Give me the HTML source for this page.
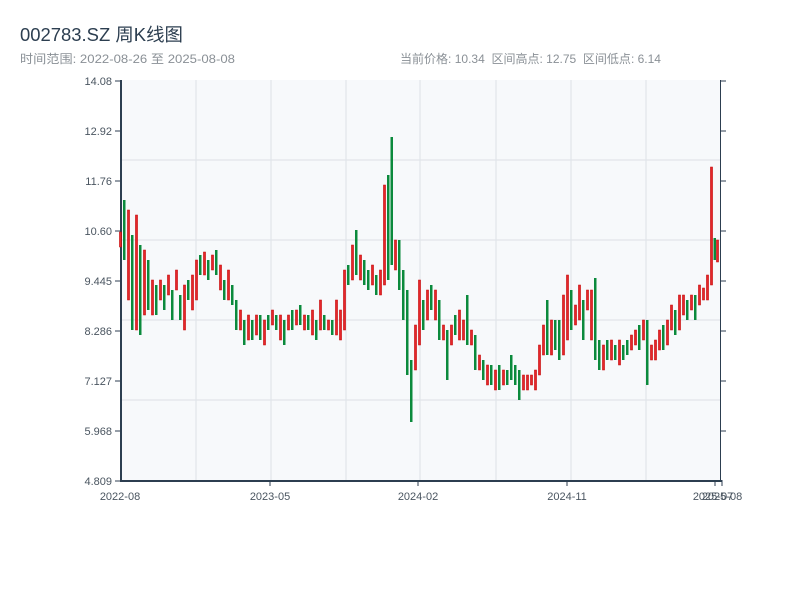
<!DOCTYPE html>
<html><head><meta charset="utf-8"><style>
body{margin:0;background:#fff;width:800px;height:600px;overflow:hidden;font-family:"Liberation Sans","Noto Sans CJK SC",sans-serif}
</style></head><body>
<svg width="800" height="600" xmlns="http://www.w3.org/2000/svg" font-family="Liberation Sans, Noto Sans CJK SC, sans-serif">
<text x="20" y="41" font-size="18" fill="#2c3e50" textLength="163" lengthAdjust="spacingAndGlyphs">002783.SZ 周K线图</text>
<text x="20" y="63" font-size="12" fill="#8a9096" textLength="215" lengthAdjust="spacingAndGlyphs">时间范围: 2022-08-26 至 2025-08-08</text>
<text x="400" y="63" font-size="12" fill="#8a9096" textLength="261" lengthAdjust="spacingAndGlyphs" xml:space="preserve">当前价格: 10.34  区间高点: 12.75  区间低点: 6.14</text>
<rect x="121" y="80" width="599" height="400" fill="#f7f9fb"/>
<g stroke="#e1e5ea" stroke-width="1.2">
<line x1="196" y1="80" x2="196" y2="480"/><line x1="271" y1="80" x2="271" y2="480"/><line x1="346" y1="80" x2="346" y2="480"/><line x1="420" y1="80" x2="420" y2="480"/><line x1="496" y1="80" x2="496" y2="480"/><line x1="571" y1="80" x2="571" y2="480"/><line x1="646" y1="80" x2="646" y2="480"/>
<line x1="121" y1="160" x2="720" y2="160"/><line x1="121" y1="240" x2="720" y2="240"/><line x1="121" y1="320" x2="720" y2="320"/><line x1="121" y1="400" x2="720" y2="400"/>
</g>
<g stroke="#2c3e50" stroke-width="1">
<line x1="720.5" y1="80" x2="720.5" y2="481"/>
<line x1="720" y1="81" x2="726" y2="81"/><line x1="720" y1="131" x2="726" y2="131"/><line x1="720" y1="181" x2="726" y2="181"/><line x1="720" y1="231" x2="726" y2="231"/><line x1="720" y1="281" x2="726" y2="281"/><line x1="720" y1="331" x2="726" y2="331"/><line x1="720" y1="381" x2="726" y2="381"/><line x1="720" y1="431" x2="726" y2="431"/>
<line x1="115" y1="81" x2="121" y2="81"/><line x1="115" y1="131" x2="121" y2="131"/><line x1="115" y1="181" x2="121" y2="181"/><line x1="115" y1="231" x2="121" y2="231"/><line x1="115" y1="281" x2="121" y2="281"/><line x1="115" y1="331" x2="121" y2="331"/><line x1="115" y1="381" x2="121" y2="381"/><line x1="115" y1="431" x2="121" y2="431"/><line x1="115" y1="481" x2="121" y2="481"/>
<line x1="270" y1="480" x2="270" y2="486"/><line x1="418" y1="480" x2="418" y2="486"/><line x1="567" y1="480" x2="567" y2="486"/><line x1="715" y1="480" x2="715" y2="486"/><line x1="722" y1="480" x2="722" y2="486"/>
</g>
<line x1="121" y1="80" x2="121" y2="482" stroke="#2c3e50" stroke-width="2"/>
<line x1="120" y1="481" x2="722" y2="481" stroke="#2c3e50" stroke-width="2"/>
<g font-size="11" fill="#4a5560" text-anchor="end">
<text x="112" y="85">14.08</text><text x="112" y="135">12.92</text><text x="112" y="185">11.76</text><text x="112" y="235">10.60</text><text x="112" y="285">9.445</text><text x="112" y="335">8.286</text><text x="112" y="385">7.127</text><text x="112" y="435">5.968</text><text x="112" y="485">4.809</text>
</g>
<g font-size="11" fill="#4a5560" text-anchor="middle">
<text x="120" y="500">2022-08</text><text x="270" y="500">2023-05</text><text x="418" y="500">2024-02</text><text x="567" y="500">2024-11</text><text x="713" y="500">2025-07</text><text x="722" y="500">2025-08</text>
</g>
<g>
<path fill="#e5262b" stroke="#c40000" stroke-width="0.6" d="
M119.5 232h2v15h-2z M127.5 210h2v90h-2z M135.5 215h2v115h-2z M143.5 250h2v65h-2z M151.5 280h2v35h-2z M159.5 280h2v20h-2z M167.5 275h2v20h-2z M175.5 270h2v20h-2z M183.5 285h2v45h-2z M191.5 275h2v35h-2z M195.5 260h2v40h-2z M203.5 252h2v23h-2z M211.5 255h2v15h-2z M219.5 265h2v25h-2z M227.5 270h2v30h-2z M239.5 310h2v20h-2z M247.5 315h2v25h-2z M255.5 315h2v20h-2z M263.5 320h2v25h-2z M271.5 310h2v15h-2z M279.5 315h2v25h-2z M287.5 315h2v15h-2z M295.5 310h2v15h-2z M303.5 315h2v15h-2z M311.5 310h2v25h-2z M319.5 300h2v30h-2z M327.5 320h2v10h-2z M335.5 300h2v35h-2z M339.5 310h2v30h-2z M343.5 270h2v60h-2z M351.5 245h2v35h-2z M359.5 255h2v25h-2z M371.5 265h2v20h-2z M379.5 270h2v25h-2z M383.5 185h2v100h-2z M394.5 240h2v30h-2z M414.5 325h2v45h-2z M418.5 280h2v65h-2z M426.5 290h2v30h-2z M434.5 290h2v30h-2z M442.5 325h2v15h-2z M450.5 325h2v20h-2z M458.5 310h2v30h-2z M462.5 320h2v20h-2z M470.5 330h2v15h-2z M478.5 355h2v15h-2z M486.5 365h2v20h-2z M494.5 370h2v20h-2z M502.5 370h2v15h-2z M522.5 375h2v15h-2z M526.5 375h2v15h-2z M530.5 375h2v10h-2z M534.5 370h2v20h-2z M538.5 345h2v30h-2z M542.5 325h2v30h-2z M550.5 320h2v35h-2z M562.5 295h2v60h-2z M566.5 275h2v65h-2z M574.5 305h2v20h-2z M578.5 285h2v35h-2z M586.5 290h2v20h-2z M590.5 290h2v50h-2z M602.5 345h2v25h-2z M610.5 340h2v20h-2z M618.5 340h2v25h-2z M630.5 335h2v15h-2z M634.5 330h2v15h-2z M642.5 320h2v20h-2z M650.5 345h2v15h-2z M654.5 340h2v20h-2z M658.5 330h2v20h-2z M666.5 320h2v25h-2z M670.5 305h2v25h-2z M678.5 295h2v35h-2z M682.5 295h2v20h-2z M690.5 295h2v15h-2z M698.5 285h2v20h-2z M702.5 288h2v12h-2z M706.5 275h2v25h-2z M710.5 167h2v118h-2z M716.5 240h2v22h-2z"/>
<path fill="#0b8a3c" d="
M123 200h2.5v60h-2.5z M131 235h2.5v95h-2.5z M139 245h2.5v90h-2.5z M147 260h2.5v50h-2.5z M155 285h2.5v30h-2.5z M163 285h2.5v25h-2.5z M171 290h2.5v30h-2.5z M179 295h2.5v25h-2.5z M187 280h2.5v20h-2.5z M199 255h2.5v20h-2.5z M207 260h2.5v20h-2.5z M215 250h2.5v25h-2.5z M223 280h2.5v20h-2.5z M231 285h2.5v20h-2.5z M235 300h2.5v30h-2.5z M243 320h2.5v25h-2.5z M251 320h2.5v20h-2.5z M259 315h2.5v25h-2.5z M267 315h2.5v15h-2.5z M275 315h2.5v15h-2.5z M283 320h2.5v25h-2.5z M291 310h2.5v20h-2.5z M299 305h2.5v20h-2.5z M307 315h2.5v15h-2.5z M315 320h2.5v20h-2.5z M323 315h2.5v15h-2.5z M331 320h2.5v15h-2.5z M347 265h2.5v20h-2.5z M355 230h2.5v45h-2.5z M363 260h2.5v25h-2.5z M367 270h2.5v20h-2.5z M375 275h2.5v20h-2.5z M387 175h2.5v105h-2.5z M390.5 137h2.5v128h-2.5z M398 240h2.5v50h-2.5z M402 270h2.5v50h-2.5z M406 290h2.5v85h-2.5z M410 360h2.5v62h-2.5z M422 300h2.5v30h-2.5z M430 285h2.5v25h-2.5z M438 300h2.5v40h-2.5z M446 330h2.5v50h-2.5z M454 315h2.5v20h-2.5z M466 295h2.5v50h-2.5z M474 335h2.5v35h-2.5z M482 360h2.5v20h-2.5z M490 365h2.5v20h-2.5z M498 365h2.5v25h-2.5z M506 370h2.5v15h-2.5z M510 355h2.5v25h-2.5z M514 365h2.5v20h-2.5z M518 370h2.5v30h-2.5z M546 300h2.5v55h-2.5z M554 320h2.5v30h-2.5z M558 320h2.5v40h-2.5z M570 290h2.5v40h-2.5z M582 300h2.5v40h-2.5z M594 278h2.5v82h-2.5z M598 340h2.5v30h-2.5z M606 340h2.5v20h-2.5z M614 345h2.5v15h-2.5z M622 345h2.5v15h-2.5z M626 340h2.5v15h-2.5z M638 325h2.5v25h-2.5z M646 320h2.5v65h-2.5z M662 325h2.5v25h-2.5z M674 310h2.5v25h-2.5z M686 300h2.5v20h-2.5z M694 295h2.5v25h-2.5z M713.5 238h2.5v22h-2.5z"/>
</g>
</svg>
</body></html>
